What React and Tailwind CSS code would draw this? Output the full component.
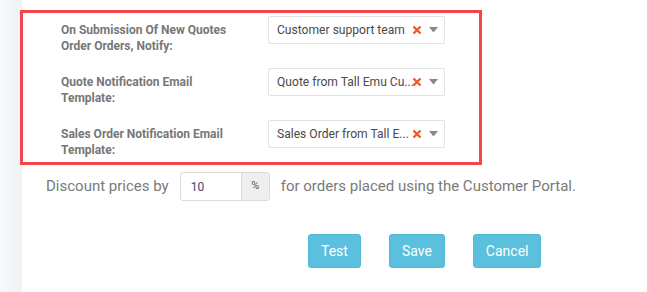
import React from 'react';

const ROWS = [
  { label: 'On Submission Of New Quotes Order Orders, Notify:', value: 'Customer support team' },
  { label: 'Quote Notification Email Template:', value: 'Quote from Tall Emu Cu...' },
  { label: 'Sales Order Notification Email Template:', value: 'Sales Order from Tall E...' }
];

const SelectBox = ({ value }) => (
  <div className="flex h-[28px] w-[177px] items-center rounded-[2px] border border-[#e3e3e3] bg-white pl-[8px] pr-[6px]">
    <span className="min-w-0 flex-1 whitespace-nowrap text-[12.1px] text-[#4a4a4a]">{value}</span>
    <svg width="10" height="10" viewBox="0 0 10 10" className="shrink-0">
      <path d="M1.5 1.5 L8.5 8.5 M8.5 1.5 L1.5 8.5" stroke="#f0592a" strokeWidth="2.4" />
    </svg>
    <svg width="9" height="6" viewBox="0 0 9 6" className="ml-[7px] shrink-0">
      <path d="M0 0 H9 L4.5 5.5 Z" fill="#888" />
    </svg>
  </div>
);

export default function App() {
  return (
    <div className="flex h-[292px] w-[647px] bg-white" style={{ fontFamily: 'Roboto, "Liberation Sans", sans-serif' }}>
      {/* Left rail */}
      <div className="w-[22px] shrink-0 bg-gradient-to-r from-[#f8f9fb] to-[#eff1f5]" />

      <div className="flex-1">
        {/* Highlighted notification settings */}
        <div className="relative ml-[-2px] mt-[10px] h-[155px] w-[462px] border-[3px] border-[#f2474a] pl-[38px] pt-[3px]">
          {ROWS.map((row, i) => (
            <div key={i} className={`flex h-[38px] items-start ${i > 0 ? 'mt-[14px]' : ''}`}>
              <div className="w-[207px] pt-[6px] text-[12px] font-bold leading-[16px] text-[#777]">
                <span className="block w-[180px]">{row.label}</span>
              </div>
              <SelectBox value={row.value} />
            </div>
          ))}
        </div>

        {/* Discount row */}
        <div className="mt-[7px] flex items-center pl-[24px] text-[15px] text-[#7a7a7a]">
          <span>Discount prices by</span>
          <div className="ml-[11px] flex h-[29px] w-[90px] overflow-hidden rounded-[3px] border border-[#dcdcdc]">
            <span className="flex flex-1 items-center pl-[10px] text-[12px] text-[#3b4a6b]">10</span>
            <span className="flex w-[28px] items-center justify-center border-l border-[#dcdcdc] bg-[#eeeeee] text-[11px] text-[#555]">%</span>
          </div>
          <span className="ml-[11px]">for orders placed using the Customer Portal.</span>
        </div>

        {/* Actions */}
        <div className="mt-[33px] flex gap-[28px] pl-[286px]">
          {['Test', 'Save', 'Cancel'].map((b) => (
            <button
              key={b}
              className="h-[34px] rounded-[3px] border border-[#4fb9da] bg-[#5bc0de] px-[12px] text-[14px] text-white"
            >
              {b}
            </button>
          ))}
        </div>
      </div>
    </div>
  );
}
